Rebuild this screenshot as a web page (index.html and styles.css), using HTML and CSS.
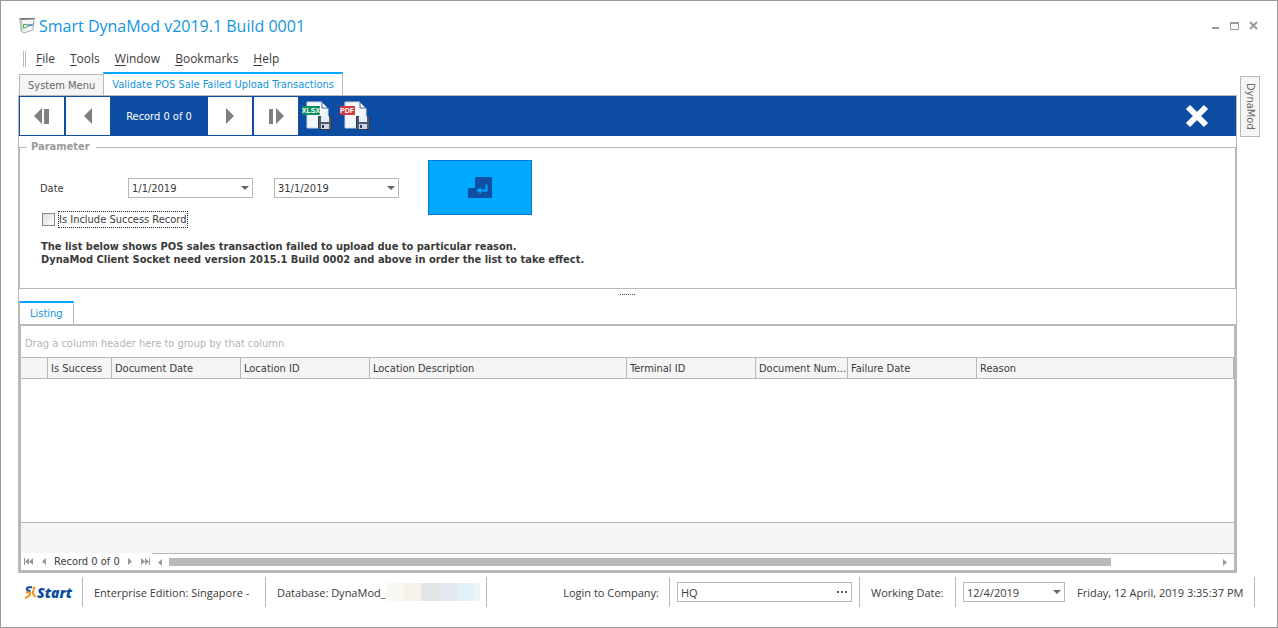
FILE: index.html
```html
<!DOCTYPE html>
<html lang="en">
<head>
    <meta charset="UTF-8">
    <meta name="viewport" content="width=device-width, initial-scale=1.0">
    <title>Smart DynaMod v2019.1 Build 0001</title>
    <link rel="stylesheet" href="styles.css">
</head>
<body>
<div class="window">
    <header class="titlebar">
        <svg class="app-icon" width="16" height="16" viewBox="0 0 16 16">
            <path d="M1 1 L15 1 L14 12 L5 15 L2 13 Z" fill="#f4f4f4" stroke="#b0b0b0"/>
            <path d="M0 0 L3 2 L4 15 L2 13 Z" fill="#c4c4c4"/>
            <path d="M0 0 H16 V1 L3 2 Z" fill="#777"/>
            <path d="M4.500 10 V6.500 H8 Q9 9 7 9.500 Z" fill="none" stroke="#3fae49"/>
            <path d="M9 9 L10 6 L11 8 L12 6 L13 8 L15 5" fill="none" stroke="#4c86c4"/>
        </svg>
        <h1>Smart DynaMod v2019.1 Build 0001</h1>
        <div class="window-buttons">
            <button aria-label="Minimize"><svg width="9" height="9"><path d="M1 7h7" stroke="#999" stroke-width="2"/></svg></button>
            <button aria-label="Maximize"><svg width="9" height="9"><path d="M0 2h9" stroke="#999" stroke-width="2"/><path d="M.5 2v6.500h8V2" fill="none" stroke="#999"/></svg></button>
            <button aria-label="Close"><svg width="9" height="9"><path d="M1 1l7 7M8 1l-7 7" stroke="#999" stroke-width="2"/></svg></button>
        </div>
    </header>

    <nav class="menu">
        <span class="grip"></span>
        <a href="#"><u>F</u>ile</a>
        <a href="#"><u>T</u>ools</a>
        <a href="#"><u>W</u>indow</a>
        <a href="#"><u>B</u>ookmarks</a>
        <a href="#"><u>H</u>elp</a>
    </nav>

    <div class="workspace">
        <main>
            <div class="tabs">
                <button class="tab">System Menu</button>
                <button class="tab active">Validate POS Sale Failed Upload Transactions</button>
            </div>

            <div class="panel">
                <div class="toolbar">
                    <button class="nav-btn" aria-label="First record"><svg width="16" height="16"><path d="M8 0v16L0 8z M10 1h5v15h-5z" fill="#7f7f7f"/></svg></button>
                    <button class="nav-btn" aria-label="Previous record"><svg width="16" height="16"><path d="M12 0v16L4 8z" fill="#7f7f7f"/></svg></button>
                    <span class="record">Record 0 of 0</span>
                    <button class="nav-btn" aria-label="Next record"><svg width="16" height="16"><path d="M4 0v16l8-8z" fill="#7f7f7f"/></svg></button>
                    <button class="nav-btn" aria-label="Last record"><svg width="16" height="16"><path d="M8 0v16l8-8z M1 1h4v15H1z" fill="#7f7f7f"/></svg></button>
                    <button class="export-btn" aria-label="Export to XLSX">
                        <svg width="30" height="30" viewBox="0 0 30 30">
                            <path d="M5 1h15l6 6v20H5z" fill="#f4f7fc" stroke="#c9d4e6"/>
                            <path d="M20 1v6h6z" fill="#fff" stroke="#42639a"/>
                            <rect x="0" y="5" width="18" height="9" rx="1" fill="#0a8f62"/>
                            <text x="9" y="12" class="icon-text">XLSX</text>
                            <path d="M16.500 15.500h13v13H18l-1.500-1.500z" fill="#4f5d73" stroke="#2e3a50"/>
                            <path d="M19 15h8v6h-8z" fill="#e8f0fa"/>
                            <path d="M19 23h8v5h-8z" fill="#cdd6e2"/>
                            <path d="M20 24h2v3h-2z" fill="#2e3a50"/>
                        </svg>
                    </button>
                    <button class="export-btn" aria-label="Export to PDF">
                        <svg width="30" height="30" viewBox="0 0 30 30">
                            <path d="M5 1h15l6 6v20H5z" fill="#f4f7fc" stroke="#c9d4e6"/>
                            <path d="M20 1v6h6z" fill="#fff" stroke="#42639a"/>
                            <rect x="0" y="5" width="15" height="9" rx="1" fill="#d8383b"/>
                            <text x="7" y="12" class="icon-text">PDF</text>
                            <path d="M16.500 15.500h13v13H18l-1.500-1.500z" fill="#4f5d73" stroke="#2e3a50"/>
                            <path d="M19 15h8v6h-8z" fill="#e8f0fa"/>
                            <path d="M19 23h8v5h-8z" fill="#cdd6e2"/>
                            <path d="M20 24h2v3h-2z" fill="#2e3a50"/>
                        </svg>
                    </button>
                    <button class="close-btn" aria-label="Close tab"><svg width="26" height="26"><path d="M4 4l18 18M22 4L4 22" stroke="#fff" stroke-width="6"/></svg></button>
                </div>

                <fieldset class="parameter">
                    <legend>Parameter</legend>
                    <div class="filters">
                        <div class="fields">
                            <div class="date-row">
                                <label for="dateFrom">Date</label>
                                <span class="select"><select id="dateFrom"><option>1/1/2019</option></select></span>
                                <span class="select"><select aria-label="Date to"><option>31/1/2019</option></select></span>
                            </div>
                            <div class="check-row">
                                <input type="checkbox" id="includeSuccess">
                                <label for="includeSuccess">Is Include Success Record</label>
                            </div>
                        </div>
                        <button class="enter-btn" aria-label="Enter">
                            <svg width="24" height="21" viewBox="0 0 24 21">
                                <path d="M8 0h15l1 1v19l-1 1H1l-1-1v-8l1-1h6V1z" fill="#0d4fa3"/>
                                <path d="M18.500 7.500v6h-7" fill="none" stroke="#00a8ff" stroke-width="2"/>
                                <path d="M8 13.500l5-3v6z" fill="#00a8ff"/>
                            </svg>
                        </button>
                    </div>
                    <p class="message">The list below shows POS sales transaction failed to upload due to particular reason.<br>
                    DynaMod Client Socket need version 2015.1 Build 0002 and above in order the list to take effect.</p>
                </fieldset>

                <div class="splitter"><span></span></div>

                <div class="tabs listing-tabs">
                    <button class="tab active">Listing</button>
                </div>

                <section class="listing">
                    <div class="group-bar">Drag a column header here to group by that column</div>
                    <table>
                        <thead>
                            <tr>
                                <th class="col-mark"></th>
                                <th class="col-success">Is Success</th>
                                <th class="col-medium">Document Date</th>
                                <th class="col-medium">Location ID</th>
                                <th class="col-wide">Location Description</th>
                                <th class="col-medium">Terminal ID</th>
                                <th class="col-number">Document Num...</th>
                                <th class="col-medium">Failure Date</th>
                                <th>Reason</th>
                            </tr>
                        </thead>
                    </table>
                    <div class="rows"></div>
                    <div class="summary"></div>
                    <div class="pager">
                        <div class="navigator">
                            <button aria-label="First"><svg width="10" height="7"><path d="M0 0h1v7H0zM5 0v7L1 3.500zM9 0v7L5 3.500z"/></svg></button>
                            <button aria-label="Previous"><svg width="4" height="7"><path d="M4 0v7L0 3.500z"/></svg></button>
                            <span>Record 0 of 0</span>
                            <button aria-label="Next"><svg width="4" height="7"><path d="M0 0v7l4-3.500z"/></svg></button>
                            <button aria-label="Last"><svg width="10" height="7"><path d="M9 0h1v7H9zM1 0v7l4-3.500zM5 0v7l4-3.500z"/></svg></button>
                        </div>
                        <div class="scrollbar">
                            <button aria-label="Scroll left"><svg width="4" height="7"><path d="M4 0v7L0 3.500z"/></svg></button>
                            <div class="track"><div class="thumb"></div></div>
                            <button aria-label="Scroll right"><svg width="4" height="7"><path d="M0 0v7l4-3.500z"/></svg></button>
                        </div>
                    </div>
                </section>
            </div>
        </main>
        <aside>
            <button class="dock-tab">DynaMod</button>
        </aside>
    </div>

    <footer class="statusbar">
        <button class="start">
            <svg width="12" height="13" viewBox="0 0 12 13">
                <path d="M7 1.200H4Q1 1.500 2 4Q4 5 5.500 5.500" fill="none" stroke="#0d4fa3" stroke-width="2"/>
                <path d="M1 6.500H4.500Q6 8 4 10L0 12" fill="none" stroke="#f7941d" stroke-width="2"/>
                <path d="M9 4Q7 6 8 8L10.500 11" fill="none" stroke="#f7941d" stroke-width="2"/>
                <circle cx="9" cy="2" r="1.500" fill="#f7941d"/>
            </svg>
            <span>Start</span>
        </button>
        <span class="cell edition">Enterprise Edition: Singapore -</span>
        <span class="cell database">Database: DynaMod_<span class="redacted"></span></span>
        <label class="company-label" for="company">Login to Company:</label>
        <span class="cell field"><span class="lookup"><input type="text" id="company" value="HQ"><button aria-label="Browse"><svg width="11" height="3"><path d="M0 0h2v2H0zM4 0h2v2H4zM8 0h2v2H8z" fill="#555"/></svg></button></span></span>
        <label class="cell date-label" for="workingDate">Working Date:</label>
        <span class="cell field last">
            <span class="select small"><select id="workingDate"><option>12/4/2019</option></select></span>
            <time>Friday, 12 April, 2019 3:35:37 PM</time>
        </span>
    </footer>
</div>
</body>
</html>
```

FILE: styles.css
```css
:root {
    --line: #b8b8b8;
    --blue: #0d4ca3;
    --accent: #00a8ff;
    --link: #1296e0;
    --text: #3a3a3a;
    --ui: "Open Sans", "Noto Sans", sans-serif;
    --form: "DejaVu Sans Condensed", "DejaVu Sans", sans-serif;
}

* {
    box-sizing: border-box;
}

body {
    margin: 0;
    background: #fff;
    color: var(--text);
    font-family: var(--form);
    font-size: 11px;
}

button, input, select {
    font: inherit;
    color: inherit;
    margin: 0;
    padding: 0;
    border: none;
    border-radius: 0;
    background: none;
}

svg {
    display: block;
}

.window {
    display: flex;
    flex-direction: column;
    min-height: 100vh;
    padding: 0 17px 18px;
    border: 1px solid #999;
}

/* Title and menu */
.titlebar {
    display: flex;
    align-items: center;
    height: 49px;
    padding: 0 2px 0 1px;
}

.titlebar h1 {
    margin: 0 auto 0 4px;
    font-family: var(--ui);
    font-size: 16px;
    font-weight: 400;
    color: var(--link);
}

.window-buttons {
    display: flex;
    gap: 10px;
}

.menu {
    display: flex;
    align-items: center;
    gap: 15px;
    height: 18px;
    padding-left: 5px;
    font-family: var(--ui);
    font-size: 12px;
    line-height: 16px;
}

.menu a {
    color: var(--text);
    text-decoration: none;
}

.menu u {
    text-underline-offset: 2px;
}

.grip {
    width: 3px;
    height: 16px;
    margin-right: -5px;
    border: 1px solid #bbb;
    border-width: 0 1px;
}

/* Workspace */
.workspace {
    display: flex;
    flex: 1;
    gap: 3px;
    padding-top: 4px;
}

main {
    display: flex;
    flex-direction: column;
    flex: 1;
    min-width: 0;
}

.tabs {
    display: flex;
    align-items: flex-end;
    margin-bottom: -1px;
    padding-left: 1px;
}

.tab {
    height: 22px;
    padding: 0 8px;
    border: 1px solid var(--line);
    border-right: none;
    background: #f5f5f5;
    color: #666;
}

.tab.active {
    height: 24px;
    padding-bottom: 1px;
    border-right: 1px solid var(--line);
    border-top: 2px solid var(--accent);
    border-bottom: none;
    background: #fff;
    color: var(--link);
}

.panel {
    display: flex;
    flex-direction: column;
    flex: 1;
    border: 1px solid var(--line);
}

.dock-tab {
    width: 20px;
    height: 61px;
    margin-top: 4px;
    border: 1px solid var(--line);
    background: #f5f5f5;
    color: #666;
    writing-mode: vertical-rl;
}

.toolbar {
    display: flex;
    align-items: center;
    height: 40px;
    padding: 0 26px 0 1px;
    background: var(--blue);
    color: #fff;
}

.nav-btn {
    display: flex;
    align-items: center;
    justify-content: center;
    width: 44px;
    height: 38px;
    background: #fff;
}

.nav-btn + .nav-btn {
    margin-left: 2px;
}

.record {
    width: 98px;
    text-align: center;
}

.export-btn {
    margin: 0 4px;
}

.close-btn {
    margin-left: auto;
}

.icon-text {
    font: bold 7px "Liberation Sans", sans-serif;
    fill: #fff;
    text-anchor: middle;
}

/* Parameter box */
.parameter {
    margin: 3px 0 0;
    padding: 5px 20px 22px;
    border: 1px solid var(--line);
    min-width: 0;
}

.parameter legend {
    margin-left: -13px;
    padding: 0 6px 0 4px;
    line-height: 16px;
    font-weight: bold;
    color: #999;
}

.filters {
    display: flex;
    gap: 29px;
}

.fields {
    padding-top: 18px;
}

.date-row {
    display: flex;
    align-items: center;
}

.date-row label {
    width: 88px;
}

.select {
    position: relative;
    width: 125px;
    height: 20px;
    border: 1px solid var(--line);
}

.date-row .select + .select {
    margin-left: 21px;
}

.select select {
    width: 100%;
    height: 100%;
    padding-left: 3px;
    appearance: none;
}

.select::after {
    content: "";
    position: absolute;
    right: 3px;
    top: 7px;
    border: 4px solid transparent;
    border-top-color: #666;
    border-bottom: none;
    pointer-events: none;
}

.check-row {
    display: flex;
    align-items: center;
    gap: 3px;
    margin-top: 13px;
    padding-left: 2px;
}

.check-row input {
    width: 13px;
    height: 13px;
    border: 1px solid #888;
    background: linear-gradient(135deg, #ddd, #fff);
    appearance: none;
}

.check-row label {
    border: 1px dotted #222;
    line-height: 15px;
}

.enter-btn {
    display: flex;
    align-items: center;
    justify-content: center;
    width: 104px;
    height: 55px;
    border: 1px solid #0078d7;
    background: var(--accent);
}

.message {
    margin: 12px 1px 0;
    font-weight: bold;
    line-height: 13px;
}

.splitter {
    display: flex;
    justify-content: center;
    height: 12px;
    padding-top: 5px;
}

.splitter span {
    width: 15px;
    height: 1px;
    background: repeating-linear-gradient(90deg, #555 0 1px, transparent 1px 2px);
}

/* Listing grid */
.listing-tabs {
    padding-left: 0;
}

.listing-tabs .tab {
    padding: 0 10px 1px;
}

.listing {
    display: flex;
    flex-direction: column;
    flex: 1;
    border: 2px solid var(--line);
}

.group-bar {
    height: 32px;
    padding-left: 4px;
    border-bottom: 1px solid var(--line);
    line-height: 35px;
    color: #b4b4b4;
}

table {
    width: 100%;
    table-layout: fixed;
    border-collapse: separate;
    border-spacing: 0;
}

th {
    height: 21px;
    padding: 0 0 0 3px;
    border-right: 1px solid var(--line);
    border-bottom: 1px solid var(--line);
    background: #f5f5f5;
    font-weight: normal;
    text-align: left;
    white-space: nowrap;
}

.col-mark {
    width: 27px;
}

.col-success {
    width: 64px;
}

.col-medium {
    width: 129px;
}

.col-wide {
    width: 257px;
}

.col-number {
    width: 92px;
}

.rows {
    flex: 1;
}

.summary {
    height: 31px;
    border-top: 1px solid var(--line);
    background: #f5f5f5;
}

.pager {
    display: flex;
    height: 17px;
    fill: #999;
}

.navigator {
    display: flex;
    align-items: center;
    gap: 8px;
    width: 131px;
    padding-left: 3px;
}

.scrollbar {
    display: flex;
    align-items: center;
    flex: 1;
    gap: 7px;
    padding: 0 7px 0 6px;
    border-top: 1px solid var(--line);
}

.track {
    flex: 1;
}

.thumb {
    width: 90%;
    height: 8px;
    background: var(--line);
}

/* Status bar */
.statusbar {
    display: flex;
    align-items: center;
    height: 34px;
    margin-top: 2px;
    padding-right: 5px;
    font-family: var(--ui);
    font-size: 11px;
    white-space: nowrap;
}

.start {
    display: flex;
    align-items: center;
    width: 64px;
    padding-left: 7px;
    font: italic 800 14px "Open Sans", sans-serif;
    color: var(--blue);
}

.cell {
    display: flex;
    align-items: center;
    height: 30px;
    padding-left: 11px;
    border-left: 1px solid var(--line);
}

.edition {
    width: 183px;
}

.database {
    width: 222px;
    border-right: 1px solid var(--line);
}

.redacted {
    width: 94px;
    height: 18px;
    background: linear-gradient(90deg, #f8f9f3 0 18px, #f6f1ea 18px 35px, #e3e6e6 35px 53px, #e3e8f0 53px 71px, #e2f0f9 71px 88px, #edf3f9 88px);
}

.company-label {
    margin-left: auto;
    padding-right: 10px;
}

.field {
    padding: 0 7px;
}

.date-label {
    width: 96px;
}

.lookup {
    display: flex;
    align-items: center;
    width: 175px;
    height: 20px;
    padding: 0 3px;
    border: 1px solid var(--line);
}

.lookup input {
    flex: 1;
    min-width: 0;
}

.select.small {
    width: 102px;
}

.last {
    gap: 12px;
    width: 300px;
    border-right: 1px solid var(--line);
}
```
